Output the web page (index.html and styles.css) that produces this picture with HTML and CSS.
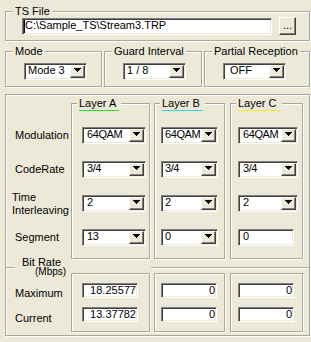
FILE: index.html
```html
<!DOCTYPE html>
<html lang="en">
<head>
    <meta charset="UTF-8">
    <title>TS File settings</title>

    <link rel="stylesheet" href="styles.css">
</head>
<body>
<div class="dialog">
    <fieldset class="group file-group">
        <legend>TS File</legend>
        <div class="file-row">
            <div class="edit file-edit"><span class="caret"></span>C:\Sample_TS\Stream3.TRP</div>
            <div class="button browse">...</div>
        </div>
    </fieldset>

    <div class="option-row">
        <fieldset class="group option mode-group">
            <legend>Mode</legend>
            <div class="combo">
                <span class="combo-text">Mode 3</span>
                <span class="drop"><svg width="7" height="4" viewBox="0 0 7 4"><path d="M0 0h7v1h-1v1h-1v1h-1v1h-1v-1h-1v-1h-1v-1h-1z"/></svg></span>
            </div>
        </fieldset>

        <fieldset class="group option guard-group">
            <legend>Guard Interval</legend>
            <div class="combo">
                <span class="combo-text">1 / 8</span>
                <span class="drop"><svg width="7" height="4" viewBox="0 0 7 4"><path d="M0 0h7v1h-1v1h-1v1h-1v1h-1v-1h-1v-1h-1v-1h-1z"/></svg></span>
            </div>
        </fieldset>

        <fieldset class="group option partial-group">
            <legend>Partial Reception</legend>
            <div class="combo">
                <span class="combo-text">OFF</span>
                <span class="drop"><svg width="7" height="4" viewBox="0 0 7 4"><path d="M0 0h7v1h-1v1h-1v1h-1v1h-1v-1h-1v-1h-1v-1h-1z"/></svg></span>
            </div>
        </fieldset>
    </div>

    <div class="group layers">
        <div class="layer-section">
            <div class="labels">
                <div class="label">Modulation</div>
                <div class="label">CodeRate</div>
                <div class="label label-wrap"><span>Time<br>Interleaving</span></div>
                <div class="label">Segment</div>
            </div>

            <fieldset class="group layer col-a">
                <legend><span class="mark mark-a">Layer A</span></legend>
                <div class="stack">
                    <div class="combo">
                        <span class="combo-text">64QAM</span>
                        <span class="drop"><svg width="7" height="4" viewBox="0 0 7 4"><path d="M0 0h7v1h-1v1h-1v1h-1v1h-1v-1h-1v-1h-1v-1h-1z"/></svg></span>
                    </div>
                    <div class="combo">
                        <span class="combo-text">3/4</span>
                        <span class="drop"><svg width="7" height="4" viewBox="0 0 7 4"><path d="M0 0h7v1h-1v1h-1v1h-1v1h-1v-1h-1v-1h-1v-1h-1z"/></svg></span>
                    </div>
                    <div class="combo">
                        <span class="combo-text">2</span>
                        <span class="drop"><svg width="7" height="4" viewBox="0 0 7 4"><path d="M0 0h7v1h-1v1h-1v1h-1v1h-1v-1h-1v-1h-1v-1h-1z"/></svg></span>
                    </div>
                    <div class="combo">
                        <span class="combo-text">13</span>
                        <span class="drop"><svg width="7" height="4" viewBox="0 0 7 4"><path d="M0 0h7v1h-1v1h-1v1h-1v1h-1v-1h-1v-1h-1v-1h-1z"/></svg></span>
                    </div>
                </div>
            </fieldset>

            <fieldset class="group layer col-b">
                <legend><span class="mark mark-b">Layer B</span></legend>
                <div class="stack">
                    <div class="combo">
                        <span class="combo-text">64QAM</span>
                        <span class="drop"><svg width="7" height="4" viewBox="0 0 7 4"><path d="M0 0h7v1h-1v1h-1v1h-1v1h-1v-1h-1v-1h-1v-1h-1z"/></svg></span>
                    </div>
                    <div class="combo">
                        <span class="combo-text">3/4</span>
                        <span class="drop"><svg width="7" height="4" viewBox="0 0 7 4"><path d="M0 0h7v1h-1v1h-1v1h-1v1h-1v-1h-1v-1h-1v-1h-1z"/></svg></span>
                    </div>
                    <div class="combo">
                        <span class="combo-text">2</span>
                        <span class="drop"><svg width="7" height="4" viewBox="0 0 7 4"><path d="M0 0h7v1h-1v1h-1v1h-1v1h-1v-1h-1v-1h-1v-1h-1z"/></svg></span>
                    </div>
                    <div class="combo">
                        <span class="combo-text">0</span>
                        <span class="drop"><svg width="7" height="4" viewBox="0 0 7 4"><path d="M0 0h7v1h-1v1h-1v1h-1v1h-1v-1h-1v-1h-1v-1h-1z"/></svg></span>
                    </div>
                </div>
            </fieldset>

            <fieldset class="group layer col-c">
                <legend><span class="mark mark-c">Layer C</span></legend>
                <div class="stack">
                    <div class="combo">
                        <span class="combo-text">64QAM</span>
                        <span class="drop"><svg width="7" height="4" viewBox="0 0 7 4"><path d="M0 0h7v1h-1v1h-1v1h-1v1h-1v-1h-1v-1h-1v-1h-1z"/></svg></span>
                    </div>
                    <div class="combo">
                        <span class="combo-text">3/4</span>
                        <span class="drop"><svg width="7" height="4" viewBox="0 0 7 4"><path d="M0 0h7v1h-1v1h-1v1h-1v1h-1v-1h-1v-1h-1v-1h-1z"/></svg></span>
                    </div>
                    <div class="combo">
                        <span class="combo-text">2</span>
                        <span class="drop"><svg width="7" height="4" viewBox="0 0 7 4"><path d="M0 0h7v1h-1v1h-1v1h-1v1h-1v-1h-1v-1h-1v-1h-1z"/></svg></span>
                    </div>
                    <div class="edit segment">0</div>
                </div>
            </fieldset>
        </div>

        <fieldset class="bitrate">
            <legend>
                <span class="bitrate-title">Bit Rate</span>
                <span class="bitrate-unit">(Mbps)</span>
            </legend>
            <div class="bitrate-row">
                <div class="labels bitrate-labels">
                    <div class="label">Maximum</div>
                    <div class="label">Current</div>
                </div>
                <div class="group rate col-a">
                    <div class="edit number">18.25577</div>
                    <div class="edit number">13.37782</div>
                </div>
                <div class="group rate col-b">
                    <div class="edit number">0</div>
                    <div class="edit number">0</div>
                </div>
                <div class="group rate col-c">
                    <div class="edit number">0</div>
                    <div class="edit number">0</div>
                </div>
            </div>
        </fieldset>
    </div>
</div>
</body>
</html>
```

FILE: styles.css
```css
body {
    margin: 0;
    background-color: #ece9d8;
    font-family: "Liberation Sans", Arial, sans-serif;
    font-size: 11px;
    color: #000;
}

.dialog {
    box-sizing: border-box;
    width: 311px;
    height: 342px;
    padding: 5px 1px 0 5px;
    overflow: hidden;
}

/* etched group box */
.group {
    box-sizing: border-box;
    margin: 0;
    padding: 0;
    min-width: 0;
    border: 1px solid #aca899;
    box-shadow: inset 1px 1px 0 #fff, 1px 1px 0 #fff;
}

.group > legend {
    margin-left: 7px;
    padding: 0 2px;
    line-height: 13px;
    background-color: #ece9d8;
}

/* sunken edit */
.edit {
    box-sizing: border-box;
    padding: 1px;
    border: 1px solid;
    border-color: #808080 #fff #fff #808080;
    box-shadow: inset 1px 1px 0 #404040, inset -1px -1px 0 #ece9d8;
    background-color: #fff;
    line-height: 11px;
    white-space: nowrap;
    overflow: hidden;
}

/* raised push button */
.button {
    box-sizing: border-box;
    border: 1px solid;
    border-color: #fff #404040 #404040 #fff;
    box-shadow: inset -1px -1px 0 #808080;
    background-color: #ece9d8;
    text-align: center;
}

.file-row {
    display: flex;
    align-items: flex-start;
    margin: 0 13px 5px 16px;
}

.file-edit {
    width: 250px;
    height: 17px;
}

.caret {
    display: inline-block;
    width: 1px;
    height: 13px;
    vertical-align: top;
    background-color: #000;
}

.browse {
    flex: none;
    width: 17px;
    height: 18px;
    margin: -1px 0 0 7px;
    line-height: 14px;
}

/* drop-down list */
.combo {
    box-sizing: border-box;
    display: flex;
    height: 17px;
    padding: 1px;
    border: 1px solid;
    border-color: #808080 #fff #fff #808080;
    box-shadow: inset 1px 1px 0 #404040, inset -1px -1px 0 #ece9d8;
    background-color: #fff;
}

.combo-text {
    flex: 1;
    min-width: 0;
    padding-left: 2px;
    line-height: 11px;
    white-space: nowrap;
}

.drop {
    flex: none;
    box-sizing: border-box;
    width: 15px;
    padding: 2px 0 0 3px;
    border: 1px solid;
    border-color: #fff #404040 #404040 #fff;
    box-shadow: inset -1px -1px 0 #808080;
    background-color: #ece9d8;
}

.drop svg {
    display: block;
}

.option-row {
    display: flex;
    gap: 2px;
    margin-top: 4px;
}

.mode-group {
    width: 97px;
}

.guard-group {
    width: 98px;
}

.partial-group {
    width: 106px;
}

.option .combo {
    width: 63px;
    margin: 5px 0 6px 18px;
}

.partial-group .combo-text {
    padding-left: 5px;
}

.layers {
    margin-top: 7px;
}

.layer-section {
    display: flex;
    align-items: flex-start;
}

.labels {
    flex: none;
    box-sizing: border-box;
    display: flex;
    flex-direction: column;
    gap: 17px;
    width: 65px;
    padding: 32px 0 0 9px;
}

.label {
    display: flex;
    align-items: center;
    height: 17px;
    line-height: 13px;
    white-space: nowrap;
}

.label-wrap {
    margin-left: -3px;
}

.layer {
    flex: none;
    margin-top: 2px;
}

.group.layer > legend {
    margin-left: 5px;
}

/* coloured line under each layer title */
.mark {
    padding: 0 3px 2px 0;
    background: linear-gradient(var(--mark), var(--mark)) left bottom / 100% 1px no-repeat;
}

.mark-a {
    --mark: #2ee02e;
}

.mark-b {
    --mark: #2ed8e0;
}

.mark-c {
    --mark: #f0ec2a;
}

.stack {
    display: flex;
    flex-direction: column;
    align-items: flex-start;
    gap: 17px;
    padding: 17px 0 12px;
}

.col-a {
    width: 79px;
    margin-right: 4px;
}

.col-b {
    width: 71px;
    margin-right: 5px;
}

.col-c {
    width: 73px;
}

.col-a .combo,
.col-a .edit {
    margin-left: 10px;
}

.col-b .combo,
.col-b .edit {
    margin-left: 6px;
}

.col-c .combo,
.col-c .edit {
    margin-left: 7px;
}

.col-a .combo {
    width: 64px;
}

.col-b .combo {
    width: 57px;
}

.col-c .combo {
    width: 60px;
}

.layer .combo-text {
    padding-left: 3px;
    letter-spacing: -0.4px;
}

.col-b .combo-text {
    padding-left: 2px;
}

.segment {
    width: 56px;
    height: 17px;
    padding-left: 4px;
}

/* bit rate part shares the outer box, only the top line is its own */
.bitrate {
    margin: -1px 0 0;
    padding: 0 0 3px;
    min-width: 0;
    border: 0;
    border-top: 1px solid #aca899;
    box-shadow: inset 0 1px 0 #fff;
}

.bitrate > legend {
    box-sizing: border-box;
    width: 136px;
    margin-left: 9px;
    padding: 0 0 0 7px;
    background-color: #ece9d8;
}

.bitrate-title {
    display: block;
    line-height: 9px;
}

.bitrate-unit {
    display: block;
    margin-left: 13px;
    font-size: 10px;
    line-height: 10px;
}

.bitrate-row {
    display: flex;
    align-items: flex-start;
    margin-top: -4px;
}

.bitrate-labels {
    gap: 10px;
    padding-top: 13px;
}

.bitrate-labels .label {
    height: 15px;
}

.rate {
    flex: none;
    display: flex;
    flex-direction: column;
    gap: 9px;
    padding: 9px 0;
}

.rate .edit {
    width: 56px;
    height: 15px;
}

.number {
    text-align: right;
}
```
